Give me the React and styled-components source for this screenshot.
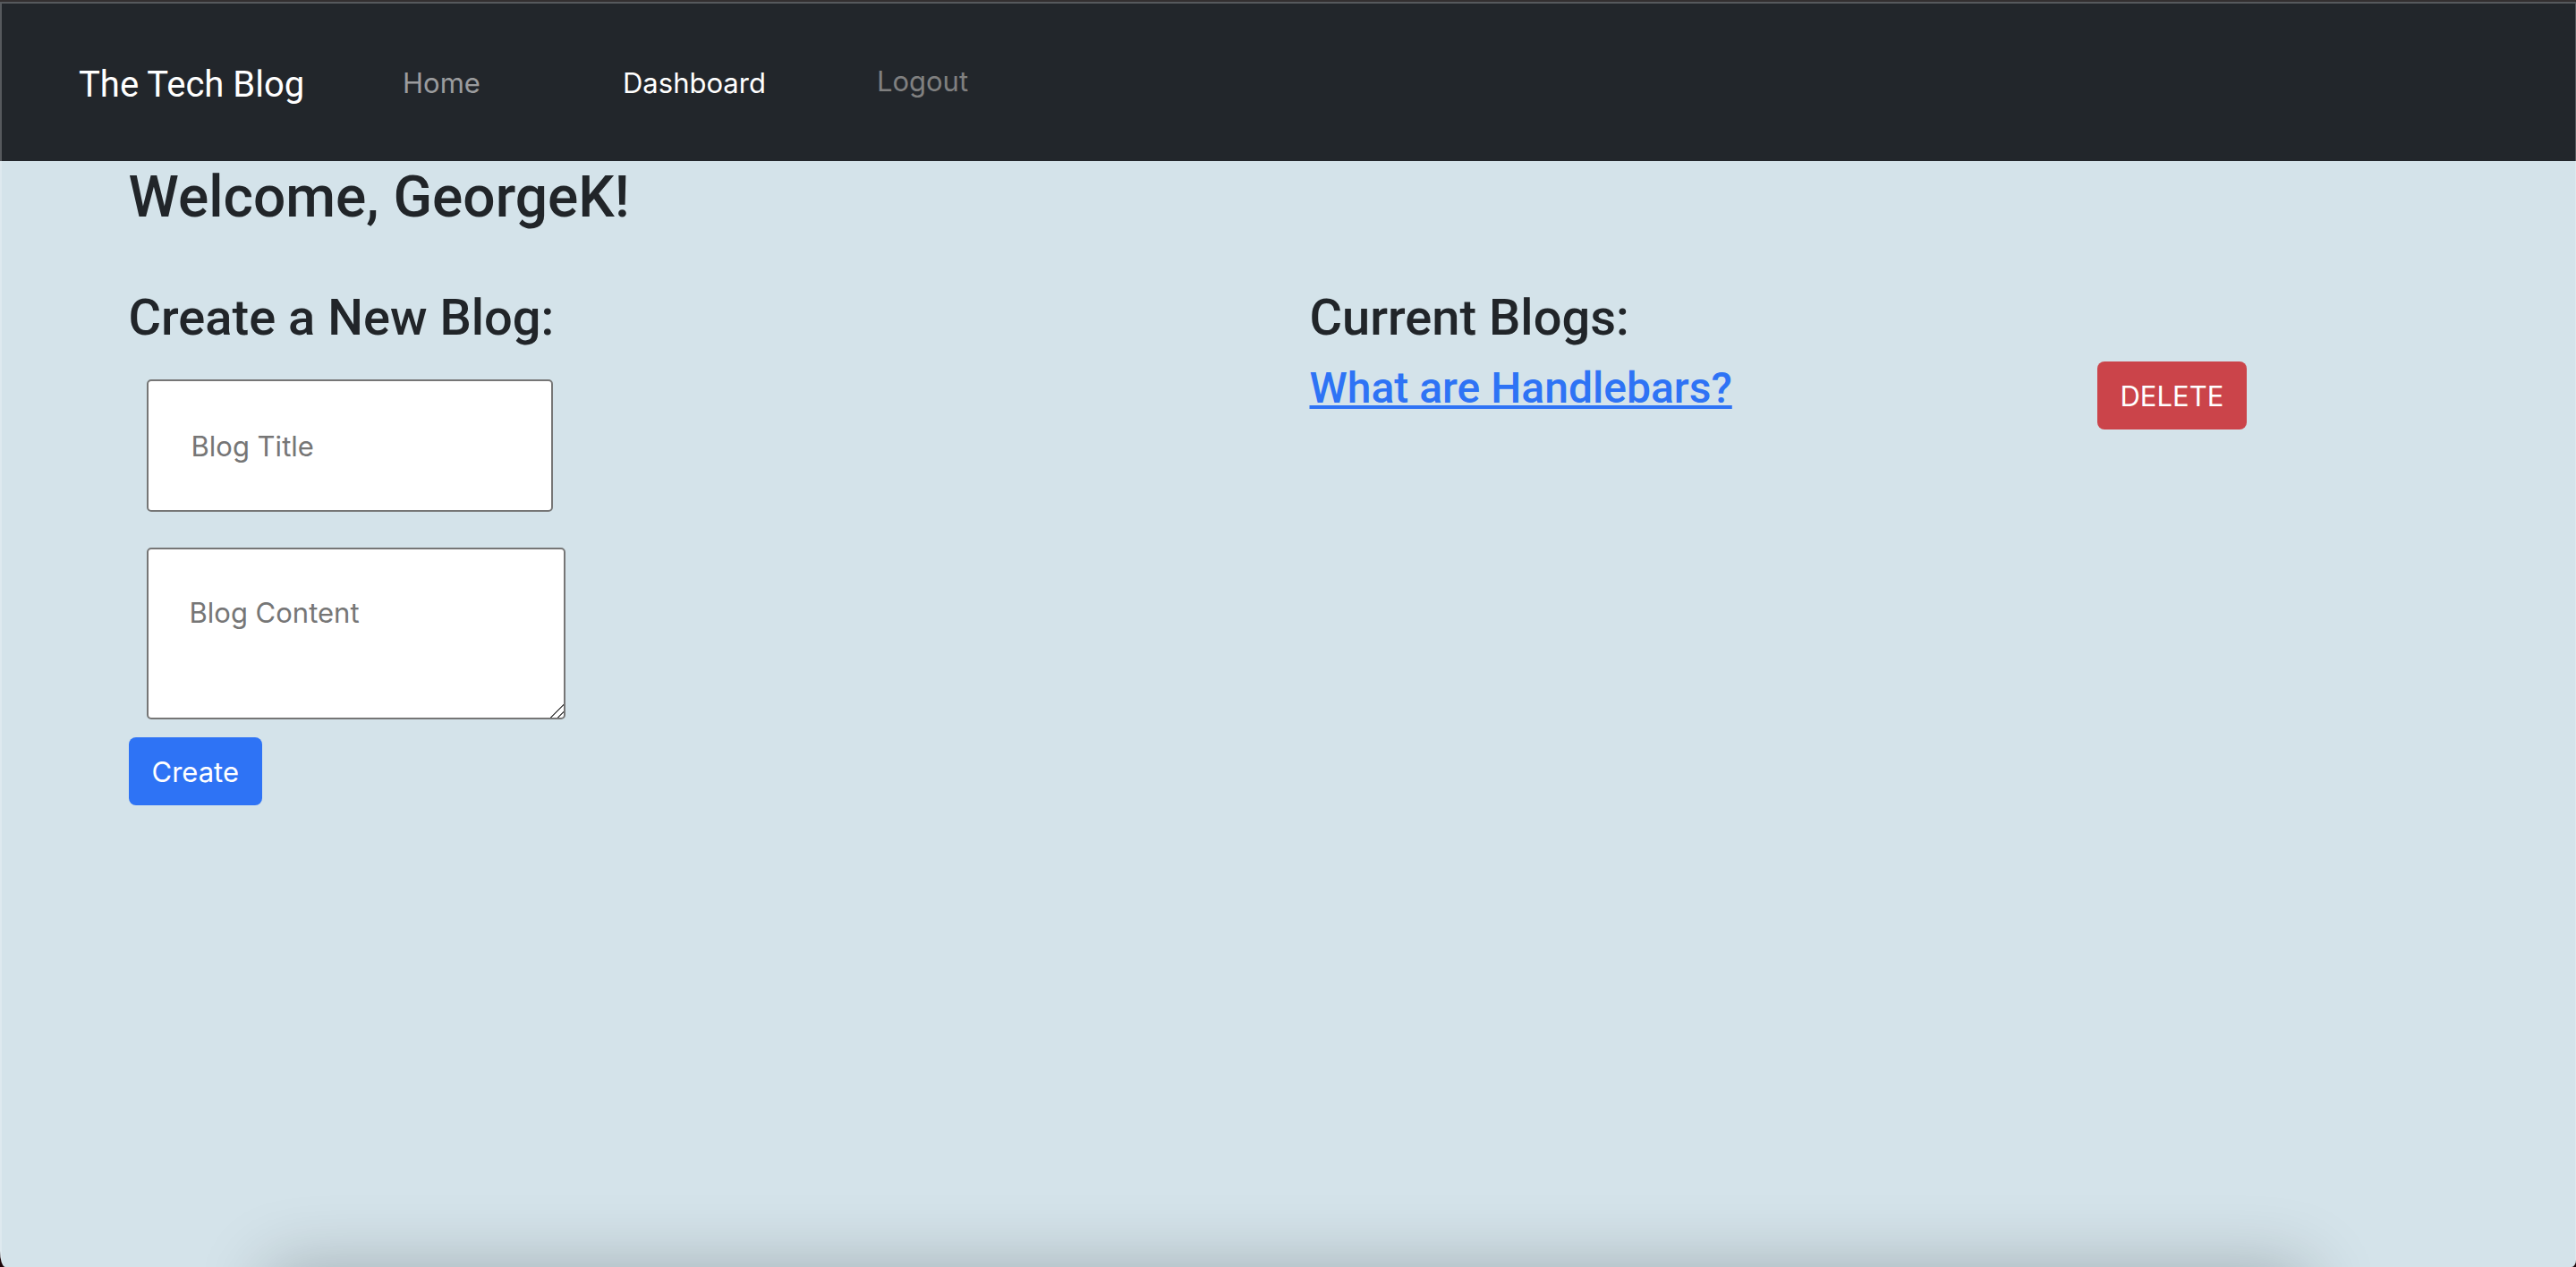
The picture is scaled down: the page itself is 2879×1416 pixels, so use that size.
import React from "react";
import styled, { createGlobalStyle } from "styled-components";

const GlobalStyle = createGlobalStyle`
  *, *::before, *::after { box-sizing: border-box; }
  body {
    margin: 0;
    background: #1c060a;
    color: #212529;
    font-family: Inter, "Liberation Sans", sans-serif;
    font-size: 31px;
    line-height: 48px;
  }
  h2, h3, h4, ul { margin: 0; padding: 0; }
  h2, h3, h4 { font-family: Roboto, Inter, sans-serif; font-weight: 500; }
  ul { list-style: none; }
  button, input, textarea { font: inherit; }
`;

const Page = styled.div`
  position: relative;
  min-height: 100vh;
  overflow: hidden;
  background: #d4e3ea;
  border-radius: 0 0 5px 6px / 0 0 8px 18px;
`;

const Edge = styled.div`
  position: absolute;
  inset: 2px 0 0;
  border: 2px solid rgba(255, 255, 255, 0.24);
  border-right-width: 1px;
  border-bottom: 0;
  pointer-events: none;
`;

const DockShadow = styled.div`
  position: absolute;
  top: 100%;
  left: 300px;
  right: 300px;
  height: 100px;
  box-shadow: 0 0 80px rgba(0, 0, 0, 0.24);
  pointer-events: none;
`;

const NavBar = styled.nav`
  display: flex;
  align-items: center;
  height: 180px;
  padding: 4px 88px 0;
  background: #22262b;
  border-top: 2px solid #332f30;
`;

const Brand = styled.a`
  width: 362px;
  padding-top: 4px;
  color: #fff;
  font-family: Roboto, Inter, sans-serif;
  font-size: 40px;
  line-height: 60px;
  text-decoration: none;
`;

const NavList = styled.ul`
  display: flex;
  align-items: center;
  gap: 124px;
`;

const NavItem = styled.li`
  min-width: 122px;
`;

const NavLink = styled.a`
  color: ${({ $active }) => ($active ? "#fff" : "#9b9c9e")};
  text-decoration: none;
`;

const LogoutButton = styled.button`
  display: block;
  padding: 0 0 4px;
  border: 0;
  background: none;
  color: #808080;
`;

const Container = styled.main`
  width: 100%;
  max-width: 2640px;
  margin: 0 auto;
`;

const Row = styled.div`
  display: grid;
  grid-template-columns: ${({ $columns }) => $columns};
`;

const Column = styled.section`
  padding: 0 24px;
`;

const Welcome = styled.h2`
  padding: 0 24px;
  margin-bottom: 56px;
  font-size: 64px;
  line-height: 82px;
`;

const SectionTitle = styled.h3`
  margin-bottom: 12px;
  font-size: 56px;
  line-height: 74px;
`;

const BlogTitle = styled.h4`
  padding: 0 24px;
  font-size: 48px;
  line-height: 60px;
`;

const BlogLink = styled.a`
  color: #2e73f5;
  text-decoration: underline;
  text-decoration-thickness: 4px;
  text-underline-offset: 3px;
  text-decoration-skip-ink: none;
`;

const BlogList = styled.ul`
  margin: 0 -24px;
`;

const Actions = styled.div`
  padding: 0 24px;
`;

const Form = styled.form`
  display: flex;
  flex-direction: column;
  align-items: flex-start;
`;

const TitleInput = styled.input`
  width: 454px;
  height: 148px;
  margin: 20px;
  padding: 48px;
  border: 2px solid #767676;
  border-radius: 5px;
  background: #fff;
  &::placeholder { color: #767676; opacity: 1; }
`;

const ContentInput = styled.textarea`
  display: block;
  width: 468px;
  height: 192px;
  margin: 20px;
  padding: 47px 46px;
  border: 2px solid #767676;
  border-radius: 5px;
  background: #fff;
  resize: both;
  overflow: hidden;
  &::placeholder { color: #767676; opacity: 1; }
  &::-webkit-resizer {
    background: linear-gradient(
      135deg,
      transparent 47%, #555 47%, #555 54%,
      transparent 54%, transparent 74%,
      #555 74%, #555 81%, transparent 81%
    );
  }
`;

const Button = styled.button`
  height: 76px;
  padding: 2px 26px 0;
  border: 0;
  border-radius: 8px;
  background: ${({ $danger }) => ($danger ? "#cb444a" : "#2e73f5")};
  color: #fff;
`;

const blogs = [{ id: 1, title: "What are Handlebars?" }];

export default function App() {
  return (
    <Page>
      <GlobalStyle />
      <NavBar>
        <Brand href="#">The Tech Blog</Brand>
        <NavList>
          <NavItem><NavLink href="#home">Home</NavLink></NavItem>
          <NavItem><NavLink href="#dashboard" $active>Dashboard</NavLink></NavItem>
          <NavItem><LogoutButton type="button">Logout</LogoutButton></NavItem>
        </NavList>
      </NavBar>
      <Container>
        <Welcome>Welcome, GeorgeK!</Welcome>
        <Row $columns="1fr 1fr">
          <Column>
            <SectionTitle>Create a New Blog:</SectionTitle>
            <Form onSubmit={(e) => e.preventDefault()}>
              <TitleInput type="text" aria-label="Blog Title" placeholder="Blog Title" />
              <ContentInput aria-label="Blog Content" placeholder="Blog Content" />
              <Button type="submit">Create</Button>
            </Form>
          </Column>
          <Column>
            <SectionTitle>Current Blogs:</SectionTitle>
            <BlogList>
              {blogs.map((blog) => (
                <li key={blog.id}>
                  <Row $columns="2fr 1fr">
                    <BlogTitle><BlogLink href="#blog">{blog.title}</BlogLink></BlogTitle>
                    <Actions><Button type="button" $danger>DELETE</Button></Actions>
                  </Row>
                </li>
              ))}
            </BlogList>
          </Column>
        </Row>
      </Container>
      <DockShadow />
      <Edge />
    </Page>
  );
}
